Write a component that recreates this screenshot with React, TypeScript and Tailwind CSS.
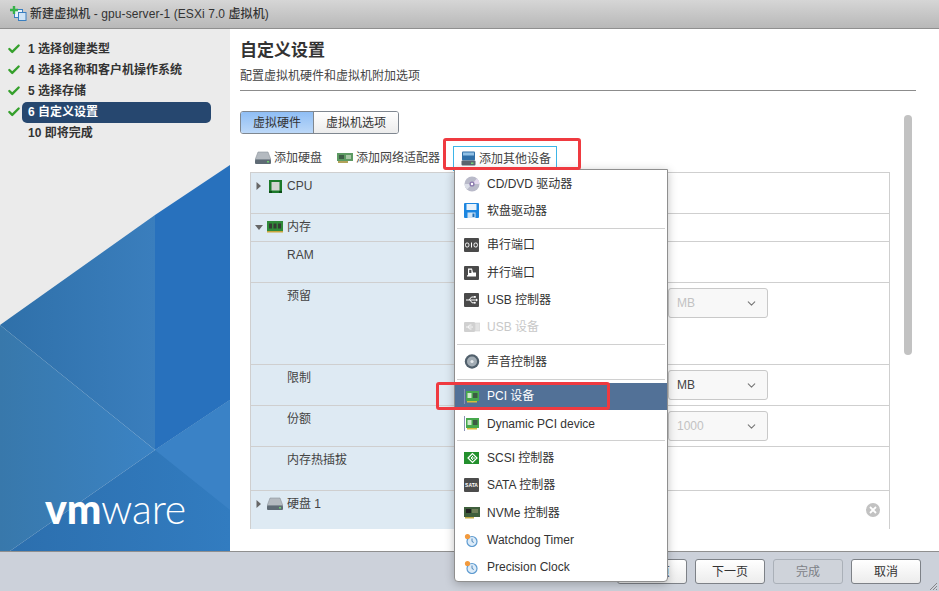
import React from 'react';
import { Check, ChevronDown } from 'lucide-react';

const FONT = "font-['Liberation_Sans','Noto_Sans_CJK_SC',sans-serif]";

const steps = [
  { n: '1 选择创建类型', done: true },
  { n: '4 选择名称和客户机操作系统', done: true },
  { n: '5 选择存储', done: true },
  { n: '6 自定义设置', done: true, active: true },
  { n: '10 即将完成', done: false },
];

const DiskIcon = () => (
  <svg width="16" height="14" viewBox="0 0 16 14" className="shrink-0">
    <path d="M3 1h10l3 8H0z" fill="#b4bac0" stroke="#8c949b" strokeWidth="0.6" />
    <rect x="0" y="8.5" width="16" height="4.5" rx="1" fill="#5f6b75" />
    <rect x="12" y="10" width="2" height="1.5" fill="#6fd06f" />
  </svg>
);

const NicIcon = () => (
  <svg width="16" height="10" viewBox="0 0 16 10" className="shrink-0">
    <rect width="16" height="8" fill="#5d9a63" />
    <rect x="2" y="2" width="5" height="4" fill="#3e5d46" />
    <rect x="9" y="2" width="5" height="4" fill="#a7c7a5" />
    <rect x="1" y="8" width="10" height="2" fill="#b2a35a" />
  </svg>
);

const OtherIcon = () => (
  <svg width="15" height="15" viewBox="0 0 15 15" className="shrink-0">
    <rect x="1" y="0.5" width="13" height="9" rx="1" fill="#2f6fa8" />
    <rect x="2" y="1.5" width="11" height="3" fill="#8fc0e6" />
    <rect x="0.5" y="9.5" width="14" height="5" rx="1" fill="#5c6670" />
    <rect x="10" y="11.5" width="2.5" height="1.4" fill="#7be07b" />
  </svg>
);

const CpuIcon = () => (
  <svg width="13" height="13" viewBox="0 0 13 13" className="shrink-0">
    <rect width="13" height="13" fill="#1c7a2a" />
    <rect x="2.5" y="2" width="8" height="8.5" fill="#d2d4d0" />
    <rect x="0" y="11" width="3" height="2" fill="#0c4d17" />
    <rect x="10" y="11" width="3" height="2" fill="#0c4d17" />
  </svg>
);

const RamIcon = () => (
  <svg width="16" height="12" viewBox="0 0 16 12" className="shrink-0">
    <rect width="16" height="10" fill="#2f8a39" />
    <rect x="2" y="2.5" width="3" height="5" fill="#333a33" />
    <rect x="6.5" y="2.5" width="3" height="5" fill="#333a33" />
    <rect x="11" y="2.5" width="3" height="5" fill="#333a33" />
    <rect y="10" width="16" height="1.5" fill="#c9a63c" />
  </svg>
);

const CdIcon = () => (
  <svg width="16" height="16" viewBox="0 0 16 16">
    <circle cx="8" cy="8" r="7.5" fill="#b9bac9" />
    <path d="M8 8 13 2.5A7.5 7.5 0 0 1 15.5 8z" fill="#e3d9ee" />
    <path d="M8 8 3 13.5A7.5 7.5 0 0 1 .5 8z" fill="#dcdfe8" />
    <circle cx="8" cy="8" r="2.6" fill="#8a78ad" />
    <circle cx="8" cy="8" r="1.2" fill="#fff" />
  </svg>
);

const FloppyIcon = () => (
  <svg width="15" height="15" viewBox="0 0 15 15">
    <rect width="15" height="15" rx="1" fill="#1c86e0" />
    <rect x="2.5" y="1" width="10" height="6" fill="#e8f2fb" />
    <rect x="3.5" y="9.5" width="8" height="5.5" fill="#cfe3f5" />
    <rect x="8.5" y="10.5" width="2" height="3.5" fill="#1c6fb8" />
  </svg>
);

const SerialIcon = () => (
  <svg width="15" height="14" viewBox="0 0 15 14">
    <rect width="15" height="14" rx="1" fill="#4a4a4a" />
    <rect x="1.5" y="5" width="3.4" height="4" rx="1.4" fill="none" stroke="#fff" strokeWidth="1" />
    <rect x="7" y="4.5" width="1" height="5" fill="#fff" />
    <rect x="10" y="5" width="3.4" height="4" rx="1.4" fill="none" stroke="#fff" strokeWidth="1" />
  </svg>
);

const ParallelIcon = () => (
  <svg width="15" height="14" viewBox="0 0 15 14">
    <rect width="15" height="14" rx="1" fill="#4a4a4a" />
    <path d="M4 2.5h4l1 4h3v4H3v-1.3h1z" fill="#fff" />
    <rect x="5.2" y="3.8" width="2.2" height="3.2" fill="#4a4a4a" />
  </svg>
);

const UsbIcon = () => (
  <svg width="15" height="14" viewBox="0 0 15 14">
    <rect width="15" height="14" rx="1" fill="#4a4a4a" />
    <path d="M2 7h10M5 7l2.5-3H10M6 7l2 2.8h2" fill="none" stroke="#fff" strokeWidth="1" />
    <path d="m12 5.5 2 1.5-2 1.5z" fill="#fff" />
    <rect x="10" y="3" width="1.8" height="1.8" fill="#fff" />
    <circle cx="10.8" cy="9.8" r="1" fill="#fff" />
  </svg>
);

const UsbDeviceIcon = () => (
  <svg width="16" height="10" viewBox="0 0 16 10">
    <rect width="11" height="10" rx="1" fill="#d0d0d0" />
    <rect x="11" y="1" width="5" height="8" fill="#e2e2e2" stroke="#cfcfcf" strokeWidth="0.6" />
    <path d="M2 5h7M4 5l1.5-2h2M4 5l1.5 2h2" fill="none" stroke="#fff" strokeWidth="0.8" />
  </svg>
);

const SoundIcon = () => (
  <svg width="16" height="15" viewBox="0 0 16 15">
    <circle cx="8" cy="7.5" r="7.2" fill="#51606c" />
    <circle cx="8" cy="7.5" r="5" fill="#a3adb5" />
    <circle cx="8" cy="7.5" r="1.6" fill="#e7ebee" />
  </svg>
);

const PciIcon = () => (
  <svg width="15" height="15" viewBox="0 0 15 15">
    <rect x="0" y="0" width="1" height="15" fill="#8a93b5" />
    <rect x="2" y="2" width="13" height="10" fill="#47a84d" />
    <rect x="3.5" y="4" width="4" height="5" fill="#cfeacc" />
    <rect x="9" y="4" width="4.5" height="5" fill="#3c5c44" />
    <rect x="3" y="12" width="10" height="1.5" fill="#d4bd3d" />
  </svg>
);

const ScsiIcon = () => (
  <svg width="15" height="12" viewBox="0 0 15 12">
    <rect width="15" height="12" fill="#23902d" />
    <path d="M8.5 1.5 4 6l4.5 4.5L13 6z" fill="none" stroke="#fff" strokeWidth="1.2" />
    <path d="M9 4 7 6l2 2M7 6h4" fill="none" stroke="#fff" strokeWidth="1" />
  </svg>
);

const SataIcon = () => (
  <div className="w-[15px] h-[14px] rounded-[1px] bg-[#4c4c4c] flex items-center justify-center text-white text-[5px] font-bold leading-none">
    SATA
  </div>
);

const NvmeIcon = () => (
  <svg width="16" height="12" viewBox="0 0 16 12">
    <rect width="16" height="10" fill="#3f5f3c" />
    <rect x="2" y="2" width="5" height="4" fill="#222" />
    <rect x="8" y="2" width="6" height="4" fill="#6f7f58" />
    <rect x="1" y="10" width="9" height="1.5" fill="#c2ad45" />
  </svg>
);

const ClockIcon = () => (
  <svg width="14" height="14" viewBox="0 0 14 14">
    <circle cx="8" cy="8.5" r="5" fill="#dcebf8" stroke="#5e9bd0" strokeWidth="1.2" />
    <path d="M8 5.5v3l1.8 1" fill="none" stroke="#3e7ab0" strokeWidth="0.9" />
    <circle cx="3.5" cy="3.5" r="2.6" fill="#f29a3e" />
  </svg>
);

type MenuEntry = { label: string; icon: React.ReactNode; disabled?: boolean; active?: boolean } | 'sep';

const menu: MenuEntry[] = [
  { label: 'CD/DVD 驱动器', icon: <CdIcon /> },
  { label: '软盘驱动器', icon: <FloppyIcon /> },
  'sep',
  { label: '串行端口', icon: <SerialIcon /> },
  { label: '并行端口', icon: <ParallelIcon /> },
  { label: 'USB 控制器', icon: <UsbIcon /> },
  { label: 'USB 设备', icon: <UsbDeviceIcon />, disabled: true },
  'sep',
  { label: '声音控制器', icon: <SoundIcon /> },
  'sep',
  { label: 'PCI 设备', icon: <PciIcon />, active: true },
  { label: 'Dynamic PCI device', icon: <PciIcon /> },
  'sep',
  { label: 'SCSI 控制器', icon: <ScsiIcon /> },
  { label: 'SATA 控制器', icon: <SataIcon /> },
  { label: 'NVMe 控制器', icon: <NvmeIcon /> },
  { label: 'Watchdog Timer', icon: <ClockIcon /> },
  { label: 'Precision Clock', icon: <ClockIcon /> },
];

const Caret = ({ open }: { open?: boolean }) => (
  <svg width="8" height="8" viewBox="0 0 8 8" className="shrink-0">
    {open ? <path d="M0 2h8L4 7z" fill="#666" /> : <path d="M1.5 0v8L6 4z" fill="#666" />}
  </svg>
);

const rows = [
  { h: 'h-[41px]', label: 'CPU', icon: <CpuIcon />, caret: 'closed' },
  { h: 'h-[28px]', label: '内存', icon: <RamIcon />, caret: 'open' },
  { h: 'h-[41px]', label: 'RAM' },
  { h: 'h-[82px]', label: '预留', select: 'MB', muted: true },
  { h: 'h-[41px]', label: '限制', select: 'MB' },
  { h: 'h-[41px]', label: '份额', select: '1000', muted: true },
  { h: 'h-[44px]', label: '内存热插拔' },
  { h: 'h-[38px]', label: '硬盘 1', icon: <DiskIcon />, caret: 'closed', remove: true },
];

const FooterButton = ({ children, disabled }: { children: React.ReactNode; disabled?: boolean }) => (
  <button
    className={`w-[70px] h-[25px] rounded-[3px] border text-[12px] ${
      disabled
        ? 'border-[#aab0b8] bg-[#cfd3da] text-[#7d8187]'
        : 'border-[#7d8187] bg-gradient-to-b from-white to-[#ececec] text-[#333]'
    }`}
  >
    {children}
  </button>
);

export default function App() {
  return (
    <div className={`relative w-[939px] h-[591px] overflow-hidden flex flex-col bg-white ${FONT}`}>
      {/* title bar */}
      <div className="h-[29px] shrink-0 flex items-center gap-[3px] pl-[10px] border-b border-[#8f8f8f] bg-gradient-to-b from-[#d6d6d6] to-[#b8b8b8]">
        <svg width="17" height="16" viewBox="0 0 17 16" className="shrink-0">
          <rect x="4.5" y="3.5" width="8" height="8" fill="#e8f3fb" stroke="#3a7fc0" />
          <rect x="8.5" y="6.5" width="7.5" height="8" fill="#cfe4f5" stroke="#3a7fc0" />
          <path d="M4 0v8M0 4h8" stroke="#37b24a" strokeWidth="2.4" />
        </svg>
        <span className="text-[12px] font-medium tracking-[0.08px] text-[#333]">新建虚拟机 - gpu-server-1 (ESXi 7.0 虚拟机)</span>
      </div>

      <div className="flex-1 flex min-h-0">
        {/* wizard steps */}
        <aside className="relative w-[230px] shrink-0 bg-[#ebebeb] overflow-hidden">
          <svg width="230" height="522" viewBox="0 0 230 522" className="absolute inset-0">
            <defs>
              <linearGradient id="facetA" x1="0" x2="1" y1="0" y2="0">
                <stop offset="0" stopColor="#2f70a9" />
                <stop offset="1" stopColor="#3a7ebd" />
              </linearGradient>
              <linearGradient id="facetB" x1="0" x2="1" y1="0" y2="0">
                <stop offset="0" stopColor="#3878ab" />
                <stop offset="1" stopColor="#3b83c4" />
              </linearGradient>
              <linearGradient id="facetC" x1="0" x2="1" y1="0" y2="0">
                <stop offset="0" stopColor="#2c6fae" />
                <stop offset="1" stopColor="#327cc0" />
              </linearGradient>
            </defs>
            <polygon points="230,136 155,186 155,421 230,371" fill="#2871bd" />
            <polygon points="155,186 0,296 155,421" fill="url(#facetA)" />
            <polygon points="0,296 155,421 10,522 0,522" fill="url(#facetB)" />
            <polygon points="155,421 230,371 230,522 10,522" fill="url(#facetC)" />
            <polygon points="155,421 230,371 230,481" fill="#3a82c6" />
          </svg>
          <div className="relative pt-[10px] flex flex-col">
            {steps.map(s => (
              <div key={s.n} className="h-[21px] flex items-center text-[12px] font-bold">
                <div className="w-[22px] pl-[7px] pb-[2px] shrink-0">
                  {s.done && <Check size={14} strokeWidth={4} className="text-[#35a02c]" />}
                </div>
                <div
                  className={`w-[189px] h-[21px] flex items-center pl-[6px] pb-[2px] rounded-[5px] ${
                    s.active ? 'bg-[#26476f] text-white' : 'text-[#333]'
                  }`}
                >
                  {s.n}
                </div>
              </div>
            ))}
          </div>
          <div className="absolute left-[45px] top-[459px] flex items-baseline text-white font-['Lato',sans-serif] text-[41px] leading-none tracking-[-0.2px]">
            <span className="font-black">vm</span>
            <span className="font-light">ware</span>
          </div>
        </aside>

        {/* customize panel */}
        <main className="relative flex-1 min-w-0 pl-[10px] pt-[11px]">
          <h1 className="text-[17px] leading-[22px] font-bold text-[#333]">自定义设置</h1>
          <p className="mt-[6px] text-[12px] leading-[16px] text-[#444]">配置虚拟机硬件和虚拟机附加选项</p>
          <div className="mt-[6px] w-[676px] border-t border-[#8c8c8c]" />

          <div className="mt-[20px] flex w-max h-[23px] text-[12px] rounded-[3px] border border-[#7f8790] overflow-hidden">
            <div className="w-[73px] flex items-center justify-center border-r border-[#7f8790] bg-gradient-to-b from-[#8fbef5] to-[#bcd8f8] text-[#333]">虚拟硬件</div>
            <div className="w-[84px] flex items-center justify-center bg-gradient-to-b from-white to-[#ececec] text-[#333]">虚拟机选项</div>
          </div>

          <div className="mt-[11px] pl-[15px] h-[26px] flex items-center text-[12px] text-[#444]">
            <div className="flex items-center gap-[3px] w-[82px]"><DiskIcon />添加硬盘</div>
            <div className="flex items-center gap-[3px] w-[116px]"><NicIcon />添加网络适配器</div>
            <div className="flex items-center gap-[3px] w-[104px] h-[25px] pl-[7px] border border-b-0 border-[#3db5e8]"><OtherIcon />添加其他设备</div>
          </div>

          <div className="ml-[10px] mt-[1px] w-[640px] border-t border-r border-[#cfcfcf]">
            {rows.map(r => (
              <div key={r.label} className={`relative ${r.h} flex border-b border-[#cfcfcf] last:border-b-0 text-[12px] text-[#444]`}>
                <div className="w-[212px] shrink-0 bg-[#deeaf3] border-l border-[#cfcfcf] flex items-start pt-[5px]">
                  <div className="w-[36px] shrink-0 flex items-center pl-[4px] h-[16px]">
                    {r.caret && <Caret open={r.caret === 'open'} />}
                    {r.icon && <div className="ml-[1px] w-[22px] flex justify-center">{r.icon}</div>}
                  </div>
                  <span className="leading-[16px]">{r.label}</span>
                </div>
                <div className="flex-1 relative">
                  {r.select && (
                    <div className={`absolute left-[206px] top-[5px] w-[100px] h-[30px] flex items-center justify-between pl-[8px] pr-[9px] rounded-[3px] border border-[#c9c9c9] bg-[#f8f8f8] ${r.muted ? 'text-[#c2c2c2]' : 'text-[#444]'}`}>
                      {r.select}
                      <ChevronDown size={13} className="text-[#777]" />
                    </div>
                  )}
                  {r.remove && (
                    <div className="absolute right-[9px] top-[12px] w-[14px] h-[14px] rounded-full bg-[#c2c2c2] flex items-center justify-center">
                      <svg width="8" height="8" viewBox="0 0 8 8"><path d="m1 1 6 6M7 1 1 7" stroke="#fff" strokeWidth="1.8" /></svg>
                    </div>
                  )}
                </div>
              </div>
            ))}
          </div>

          {/* scrollbar */}
          <div className="absolute left-[674px] top-[86px] w-[8px] h-[240px] rounded-full bg-[#c2c2c2]" />
        </main>
      </div>

      {/* footer buttons */}
      <div className="h-[40px] shrink-0 flex items-center justify-end gap-[8px] pr-[18px] border-t border-[#8f8f8f] bg-[#ccd1da]">
        <FooterButton>上一页</FooterButton>
        <FooterButton>下一页</FooterButton>
        <FooterButton disabled>完成</FooterButton>
        <FooterButton>取消</FooterButton>
      </div>

      {/* add-device dropdown */}
      <div className="absolute left-[454px] top-[169px] w-[214px] rounded-b-[4px] border border-[#8f8f8f] bg-white flex flex-col shadow-[0_2px_10px_rgba(0,0,0,0.25)] text-[12px] text-[#333]">
        {menu.map((m, i) =>
          m === 'sep' ? (
            <div key={i} className="h-[7.5px] flex items-center px-[2px]">
              <div className="w-full border-t border-[#d0d0d0]" />
            </div>
          ) : (
            <div
              key={m.label}
              className={`h-[27.2px] flex items-center ${m.active ? 'bg-[#527197] text-white' : ''} ${m.disabled ? 'text-[#c8c8c8]' : ''}`}
            >
              <div className="w-[32px] pl-[9px] shrink-0 flex items-center">{m.icon}</div>
              {m.label}
            </div>
          )
        )}
      </div>

      {/* red callouts */}
      <div className="absolute left-[443px] top-[138px] w-[138px] h-[32px] rounded-[3px] border-[3px] border-[#ef3a40]" />
      <div className="absolute left-[436px] top-[382px] w-[174px] h-[28px] rounded-[3px] border-[3px] border-[#ef3a40]" />

      {/* resize grip */}
      <svg width="8" height="8" viewBox="0 0 8 8" className="absolute right-[2px] bottom-[1px]">
        <path d="M1 8 8 1M4 8l4-4M7 8l1-1" stroke="#666" strokeWidth="0.7" />
      </svg>
    </div>
  );
}
